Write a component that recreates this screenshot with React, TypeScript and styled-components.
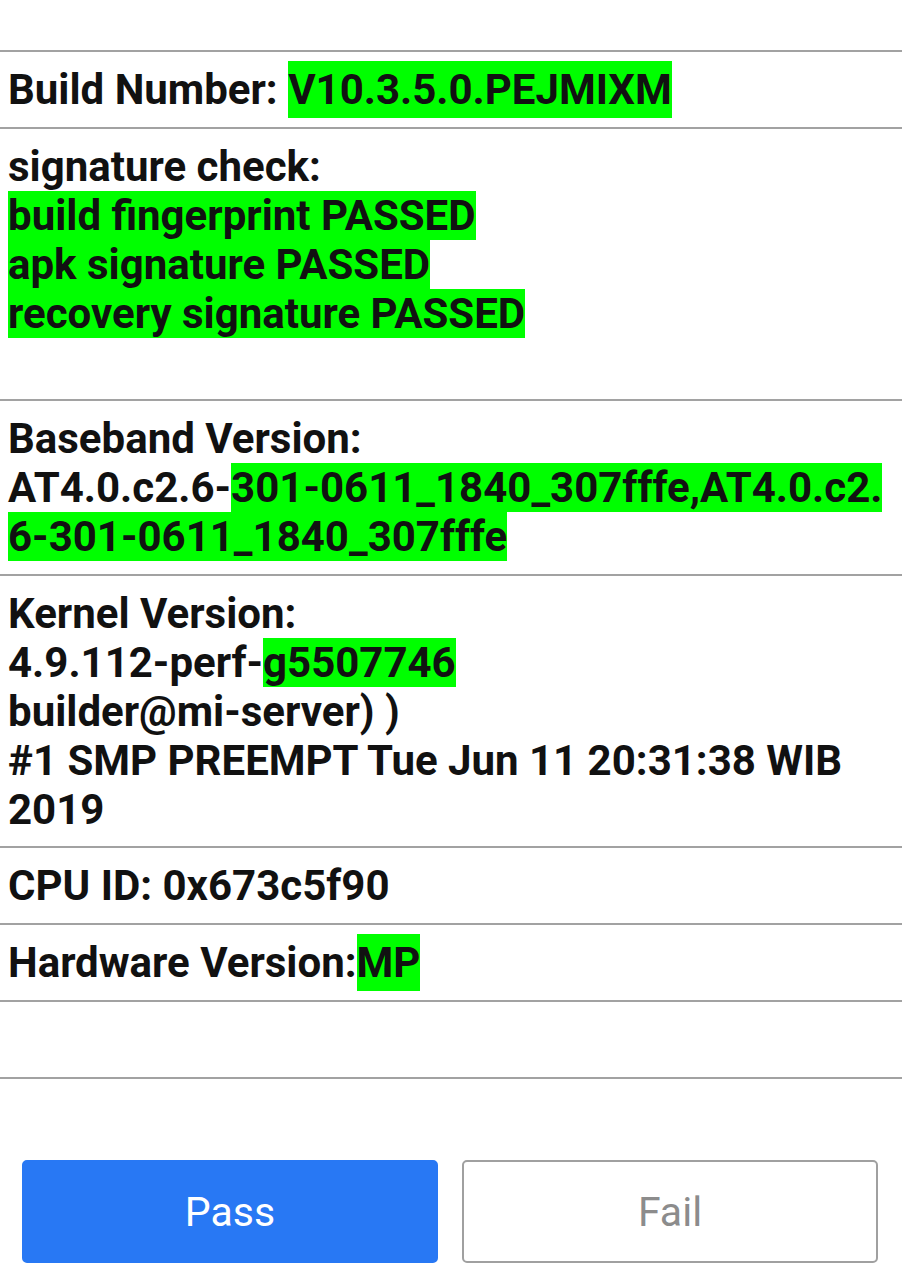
import styled, { createGlobalStyle } from 'styled-components';

const GlobalStyle = createGlobalStyle`
  html, body {
    margin: 0;
    padding: 0;
    background: #ffffff;
  }
  body {
    font-family: Roboto, 'Liberation Sans', sans-serif;
  }
`;

const Page = styled.div`
  width: 902px;
  min-height: 1280px;
  display: flex;
  flex-direction: column;
  background: #ffffff;
`;

const TopSpace = styled.div`
  height: 50px;
`;

const InfoList = styled.div`
  display: flex;
  flex-direction: column;
  border-top: 2px solid #a2a2a2;
`;

// tall rows sit a pixel tighter at the bottom in the original
const Row = styled.div<{ $minLines?: number; $tall?: boolean }>`
  padding: 13px 8px ${({ $tall }) => ($tall ? 12 : 13)}px;
  border-bottom: 2px solid #a2a2a2;
  font-size: 42px;
  font-weight: 700;
  line-height: 49px;
  color: #111111;
  min-height: ${({ $minLines }) => ($minLines ?? 1) * 49}px;
`;

const Line = styled.div`
  white-space: nowrap;
`;

const Hi = styled.span<{ $tall?: boolean }>`
  background: #00ff00;
  padding: ${({ $tall }) => ($tall ? '4px 0' : '0')};
`;

const Actions = styled.div`
  display: grid;
  grid-template-columns: 1fr 1fr;
  gap: 24px;
  padding: 81px 24px 0 22px;
`;

const ActionButton = styled.button<{ $primary?: boolean }>`
  box-sizing: border-box;
  height: 103px;
  padding: 0;
  border-radius: 5px;
  font-family: Roboto, 'Liberation Sans', sans-serif;
  font-size: 41px;
  font-weight: 400;
  cursor: pointer;
  background: ${({ $primary }) => ($primary ? '#2878f4' : '#ffffff')};
  color: ${({ $primary }) => ($primary ? '#ffffff' : '#8c8c8c')};
  border: 2px solid ${({ $primary }) => ($primary ? '#2878f4' : '#a0a0a0')};
`;

const App = () => {
  return (
    <>
      <GlobalStyle />
      <Page>
        <TopSpace />
        <InfoList>
          <Row>
            <Line>
              Build Number: <Hi $tall>V10.3.5.0.PEJMIXM</Hi>
            </Line>
          </Row>
          <Row $minLines={5} $tall>
            <Line>signature check:</Line>
            <Line>
              <Hi>build fingerprint PASSED</Hi>
            </Line>
            <Line>
              <Hi>apk signature PASSED</Hi>
            </Line>
            <Line>
              <Hi>recovery signature PASSED</Hi>
            </Line>
          </Row>
          <Row>
            <Line>Baseband Version:</Line>
            <Line>
              AT4.0.c2.6-<Hi>301-0611_1840_307fffe,AT4.0.c2.</Hi>
            </Line>
            <Line>
              <Hi>6-301-0611_1840_307fffe</Hi>
            </Line>
          </Row>
          <Row $tall>
            <Line>Kernel Version:</Line>
            <Line>
              4.9.112-perf-<Hi>g5507746</Hi>
            </Line>
            <Line>builder@mi-server) )</Line>
            <Line>#1 SMP PREEMPT Tue Jun 11 20:31:38 WIB</Line>
            <Line>2019</Line>
          </Row>
          <Row>
            <Line>CPU ID: 0x673c5f90</Line>
          </Row>
          <Row>
            <Line>
              Hardware Version:<Hi $tall>MP</Hi>
            </Line>
          </Row>
          <Row />
        </InfoList>
        <Actions>
          <ActionButton $primary>Pass</ActionButton>
          <ActionButton>Fail</ActionButton>
        </Actions>
      </Page>
    </>
  );
};

export default App;
